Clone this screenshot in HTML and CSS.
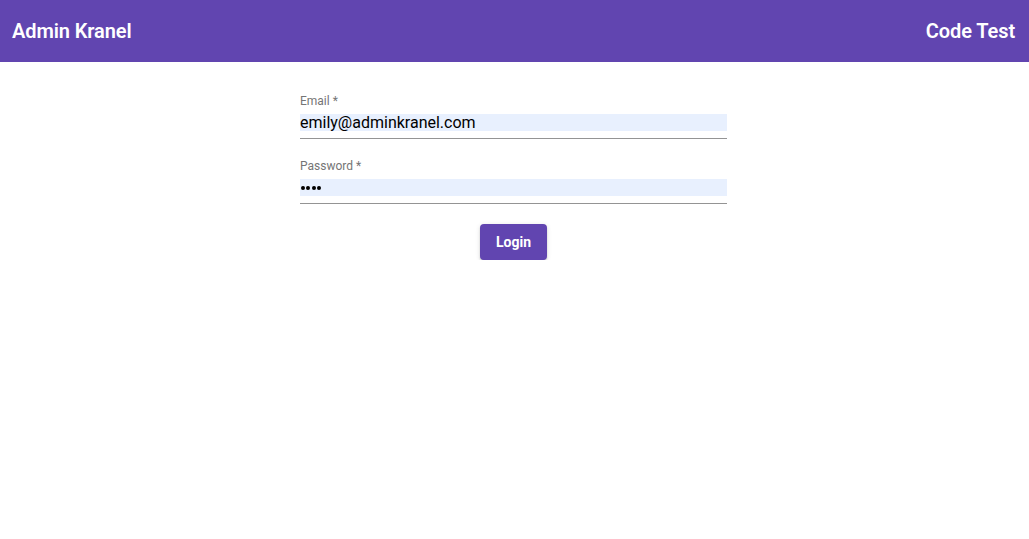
FILE: index.html
```html
<!DOCTYPE html>
<html lang="en">
<head>
<meta charset="utf-8">
<title>Admin Kranel</title>
<link rel="stylesheet" href="styles.css">
</head>
<body>
<header class="appbar">
  <div class="brand">Admin Kranel</div>
  <div class="brand">Code Test</div>
</header>
<main class="main">
  <form class="login-form">
    <div class="field">
      <label class="field-label">Email *</label>
      <div class="field-input">emily@adminkranel.com</div>
    </div>
    <div class="field">
      <label class="field-label">Password *</label>
      <div class="field-input dots"><span class="dot"></span><span class="dot"></span><span class="dot"></span><span class="dot"></span></div>
    </div>
    <div class="actions">
      <button type="button" class="btn">Login</button>
    </div>
  </form>
</main>
</body>
</html>
```

FILE: styles.css
```css
* { box-sizing: border-box; }
html, body { margin: 0; padding: 0; background: #fff; }
body { font-family: Roboto, "Noto Sans", "Liberation Sans", sans-serif; }

.appbar {
  height: 62px;
  background: #6145b0;
  color: #fff;
  display: flex;
  align-items: center;
  justify-content: space-between;
  padding: 0 14px 0 12px;
}
.brand {
  font-size: 20px;
  font-weight: 600;
  line-height: 24px;
  letter-spacing: -0.1px;
}

.main {
  display: flex;
  justify-content: center;
  padding-top: 32px;
}
.login-form {
  width: 427px;
  margin-left: -2px;
  display: flex;
  flex-direction: column;
  gap: 20px;
}
.field {
  display: flex;
  flex-direction: column;
  border-bottom: 1px solid #949494;
  padding-bottom: 7px;
}
.field-label {
  font-size: 12px;
  line-height: 14px;
  color: #757575;
  margin-bottom: 6px;
}
.field-input {
  height: 17px;
  line-height: 17px;
  font-size: 16px;
  color: #000;
  background: #e8f0fe;
  white-space: nowrap;
}
.field-input.dots {
  display: flex;
  align-items: center;
  gap: 1.6px;
  padding-left: 1px;
  padding-top: 1px;
}
.dot {
  width: 3.8px;
  height: 3.8px;
  border-radius: 50%;
  background: #000;
}
.actions {
  display: flex;
  justify-content: center;
}
.btn {
  width: 67px;
  height: 36px;
  border: none;
  border-radius: 4px;
  background: #6145b0;
  color: #fff;
  font-family: Roboto, "Noto Sans", "Liberation Sans", sans-serif;
  font-size: 14px;
  font-weight: 700;
  box-shadow: 0 3px 1px -2px rgba(0,0,0,0.2), 0 2px 2px 0 rgba(0,0,0,0.14), 0 1px 5px 0 rgba(0,0,0,0.12);
  cursor: pointer;
}
```
